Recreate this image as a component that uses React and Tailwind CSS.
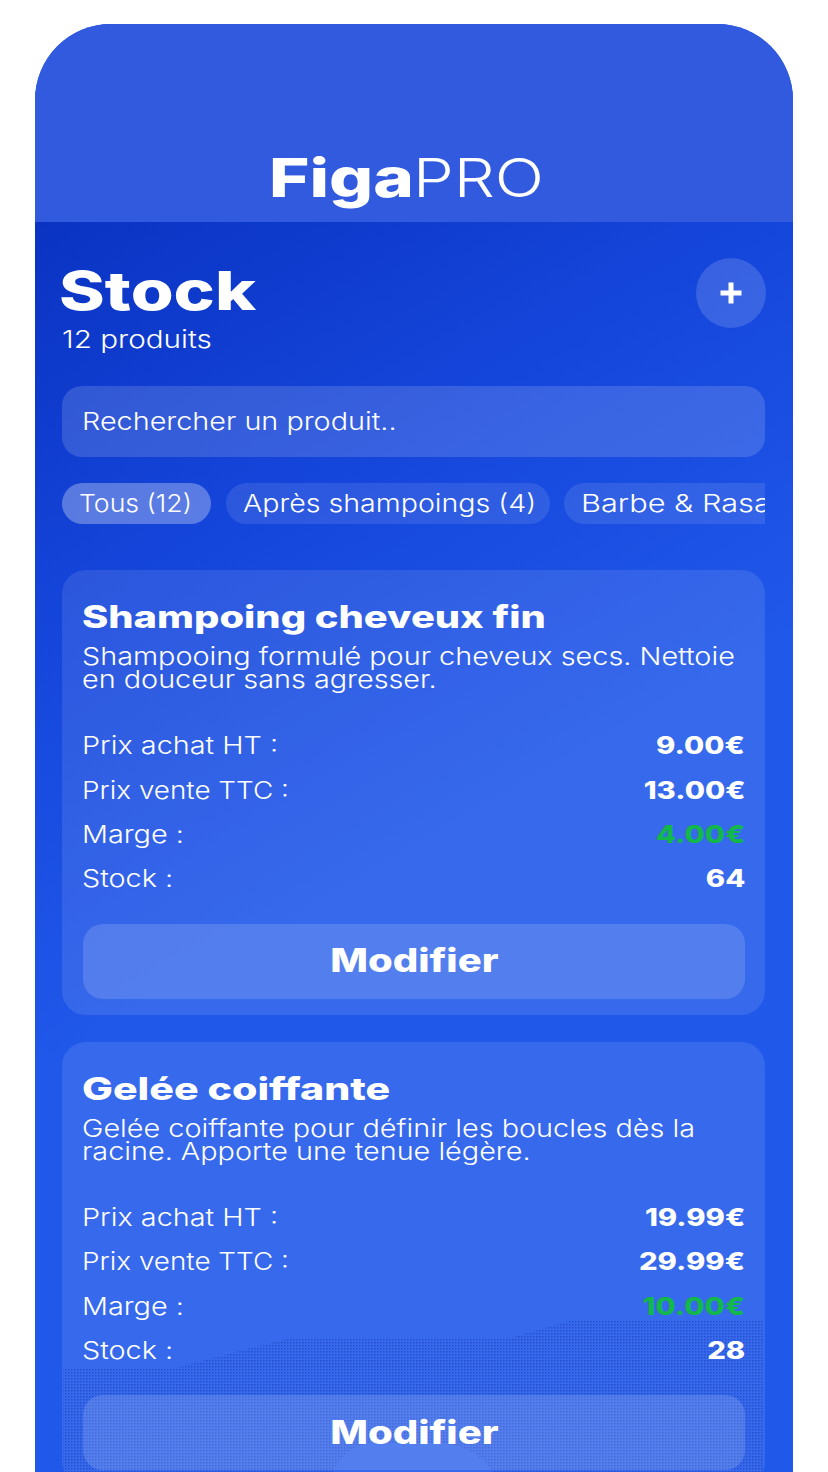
import React from "react";

const products = [
  {
    name: "Shampoing cheveux fin",
    nameScale: "scale-x-[1.285]",
    desc: ["Shampooing formulé pour cheveux secs. Nettoie", "en douceur sans agresser."],
    buy: "9.00€",
    sell: "13.00€",
    margin: "4.00€",
    stock: "64",
  },
  {
    name: "Gelée coiffante",
    nameScale: "scale-x-[1.325]",
    desc: ["Gelée coiffante pour définir les boucles dès la", "racine. Apporte une tenue légère."],
    buy: "19.99€",
    sell: "29.99€",
    margin: "10.00€",
    stock: "28",
  },
];

const Row = ({ label, value, green, labelScale = "scale-x-[1.2]" }) => (
  <div className="flex h-[44.4px] items-center justify-between">
    <span className={`inline-block origin-left text-[24px] font-[350] text-white ${labelScale}`}>{label}</span>
    <span className={`inline-block origin-right scale-x-[1.22] text-[24px] font-extrabold ${green ? "text-[#12b84a]" : "text-white"}`}>{value}</span>
  </div>
);

const ProductCard = ({ p }) => (
  <div className="rounded-[24px] bg-white/10 px-[20px] pt-[27px] pb-[16px]">
    <h2 className={`origin-left text-[31px] font-extrabold leading-[40px] whitespace-nowrap text-white ${p.nameScale}`}>{p.name}</h2>
    <p className="mt-[8px] origin-left scale-x-[1.2] whitespace-nowrap text-[24px] font-[350] leading-[23px] text-white">
      {p.desc[0]}
      <br />
      {p.desc[1]}
    </p>
    <div className="mt-[33px]">
      <Row label="Prix achat HT :" value={p.buy} />
      <Row label="Prix vente TTC :" value={p.sell} labelScale="scale-x-[1.16]" />
      <Row label="Marge :" value={p.margin} green />
      <Row label="Stock :" value={p.stock} />
    </div>
    <button className="mt-[22px] ml-[1px] flex h-[75px] w-[662px] items-center justify-center rounded-[20px] bg-white/15 text-white">
      <span className="inline-block scale-x-[1.25] text-[32px] font-extrabold">Modifier</span>
    </button>
  </div>
);

const Chip = ({ children, width, textScale, active }) => (
  <div className={`flex h-[41px] shrink-0 items-center whitespace-nowrap rounded-full pl-[17px] text-white ${width} ${active ? "bg-white/30" : "bg-white/10"}`}>
    <span className={`inline-block origin-left text-[24px] font-[350] ${textScale}`}>{children}</span>
  </div>
);

export default function App() {
  return (
    <div className="h-[1472px] w-[828px] overflow-hidden bg-white pt-[24px] pl-[35px] font-['Inter',sans-serif]">
      <div className="relative h-[1448px] w-[758px] overflow-hidden rounded-t-[76px] bg-[#2058ea]">
        <header className="flex h-[198px] items-end justify-center bg-[#325ade] pr-[20px] pb-[9px]">
          <div className="flex text-[54px] leading-[70px] text-white">
            <span className="inline-block w-[144px] origin-left scale-x-[1.28] font-extrabold">Figa</span>
            <span className="inline-block w-[127px] origin-left scale-x-[1.2] font-light">PRO</span>
          </div>
        </header>

        {/* dotted grain under the cards at the bottom of the screen */}
        <svg className="absolute bottom-0 left-0" width="758" height="160" viewBox="0 0 758 160">
          <defs>
            <pattern id="grain" width="3" height="3" patternUnits="userSpaceOnUse">
              <rect width="1.5" height="1.5" fill="#0a33c2" fillOpacity="0.8" />
            </pattern>
          </defs>
          <path
            fillRule="evenodd"
            d="M28 56 L140 56 L255 26 L475 26 L535 9 L728 8 L728 160 L458 160 Q440 132 400 131 L340 131 Q312 132 298 160 L28 160 Z"
            fill="url(#grain)"
          />
        </svg>

        <main className="relative bg-[linear-gradient(150deg,#0a33c2_0%,#1546db_25%,#2058ea_50%,#2058ea00_62%)] pr-[28px] pl-[27px]">
          <div className="flex items-start justify-between pt-[36px]">
            <div>
              <h1 className="ml-[-3px] origin-left scale-x-[1.285] text-[54px] font-extrabold leading-[66px] text-white">Stock</h1>
              <p className="mt-[1px] origin-left scale-x-[1.235] text-[24px] font-[350] leading-[30px] text-white">12 produits</p>
            </div>
            <button className="mr-[-1px] flex h-[70px] w-[70px] items-center justify-center rounded-full bg-white/15">
              <svg width="26" height="26" viewBox="0 0 26 26" fill="none">
                <path d="M13 2.5v21M2.5 13h21" stroke="white" strokeWidth="5" />
              </svg>
            </button>
          </div>

          <div className="mt-[31px] flex h-[71px] items-center rounded-[20px] bg-white/15 px-[20px] text-white">
            <span className="inline-block origin-left scale-x-[1.2] text-[24px] font-[350]">Rechercher un produit..</span>
          </div>

          <div className="mt-[26px] flex gap-[14.5px] overflow-hidden">
            <Chip active width="w-[149px]" textScale="scale-x-[1.11]">Tous (12)</Chip>
            <Chip width="w-[324px]" textScale="scale-x-[1.19]">Après shampoings (4)</Chip>
            <Chip width="w-[260px]" textScale="scale-x-[1.28]">Barbe &amp; Rasage (3)</Chip>
          </div>

          <div className="mt-[46px] flex flex-col gap-[27px]">
            {products.map((p) => (
              <ProductCard key={p.name} p={p} />
            ))}
          </div>
        </main>
      </div>
    </div>
  );
}
